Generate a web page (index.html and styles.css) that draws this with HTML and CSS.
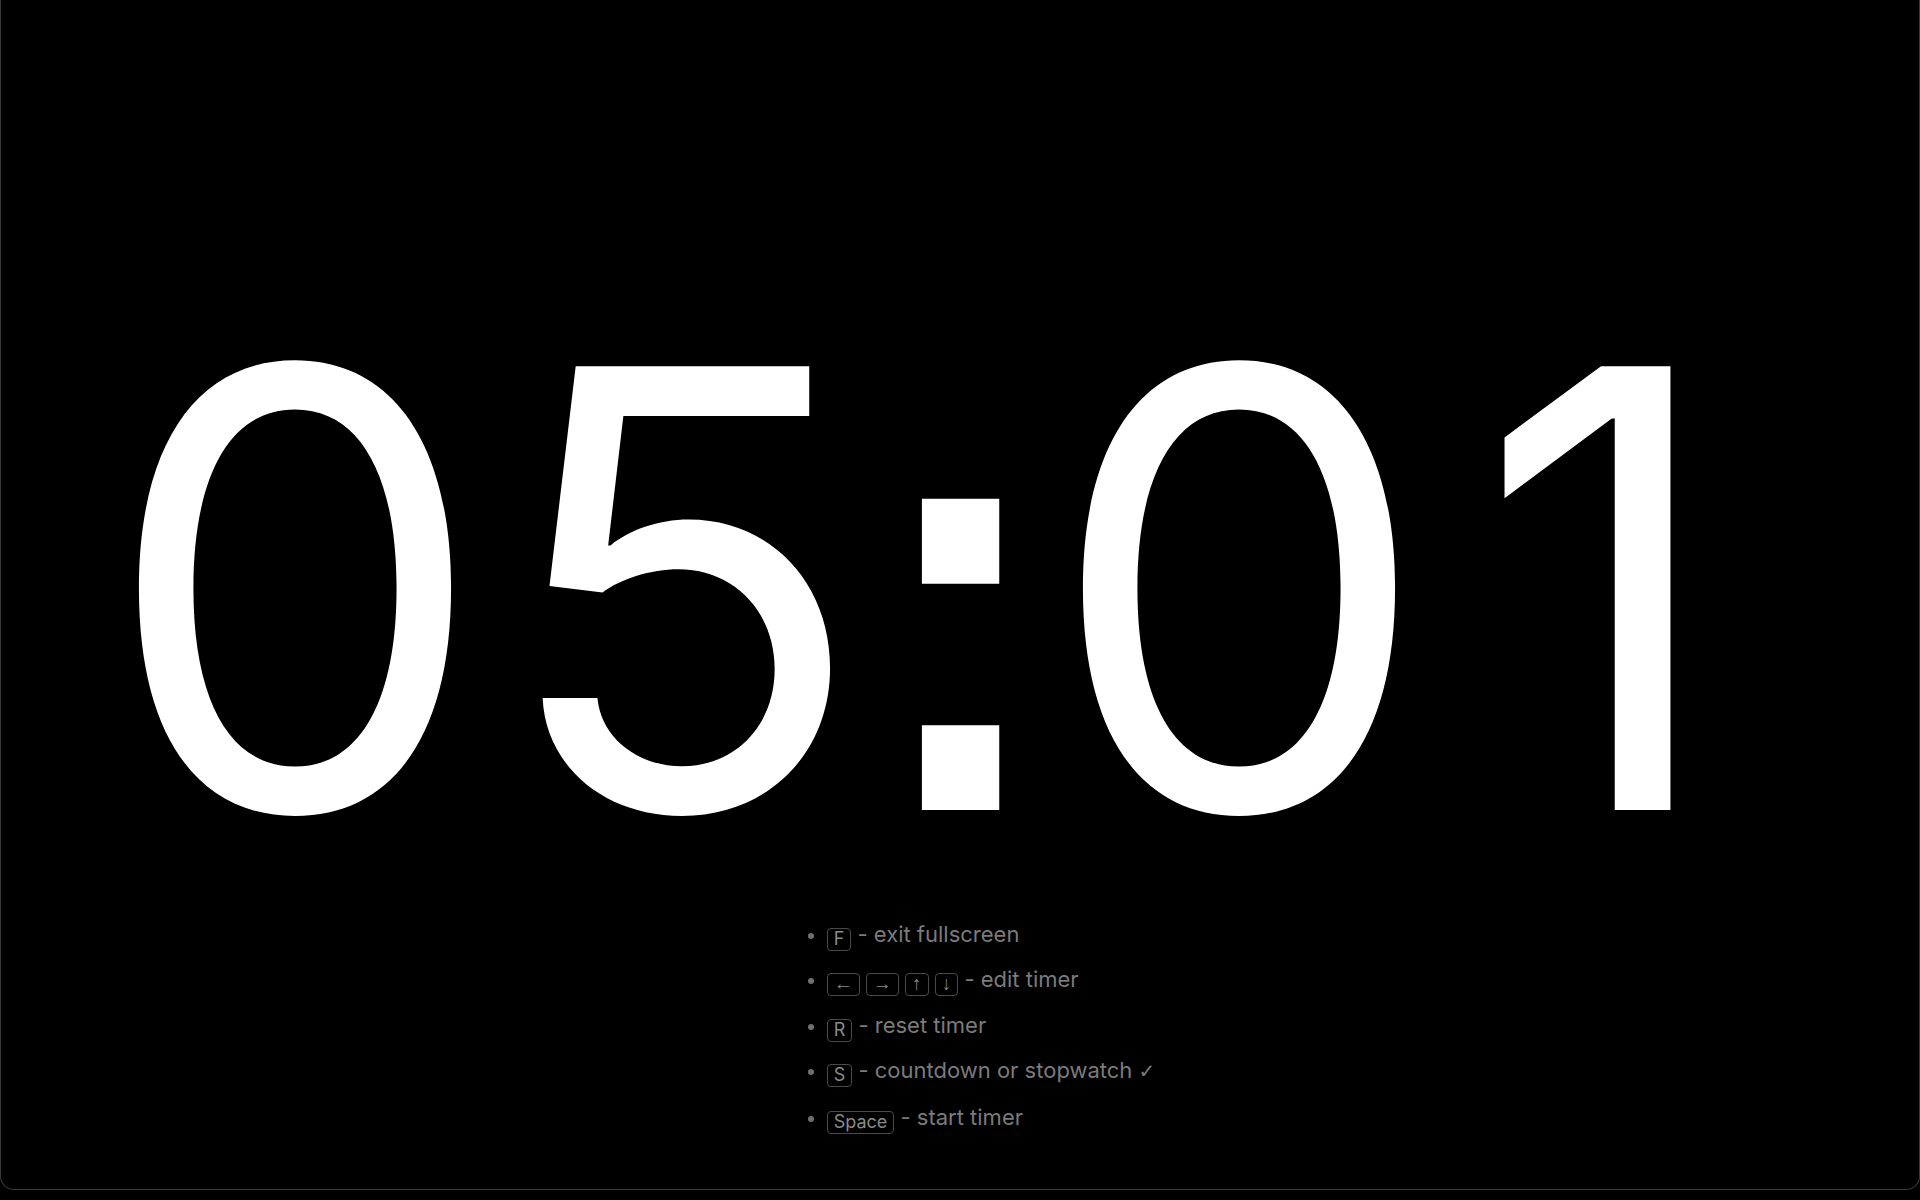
FILE: index.html
```html
<!DOCTYPE html>
<html lang="en">
<head>
<meta charset="utf-8">
<title>Timer</title>
<link rel="stylesheet" href="styles.css">
</head>
<body>
<div class="frame">
  <div class="spacer"></div>
  <div class="timer"><span class="digit">0</span><span class="digit">5</span><span class="colon">:</span><span class="digit">0</span><span class="digit one">1</span></div>
  <div class="help-row">
    <ul class="help">
      <li><span class="key">F</span> - exit fullscreen</li>
      <li><span class="key arrow">&larr;</span> <span class="key arrow">&rarr;</span> <span class="key arrow">&uarr;</span> <span class="key arrow">&darr;</span> - edit timer</li>
      <li><span class="key">R</span> - reset timer</li>
      <li><span class="key">S</span> - countdown or stopwatch <span class="check">&#10003;</span></li>
      <li><span class="key">Space</span> - start timer</li>
    </ul>
  </div>
</div>
</body>
</html>
```

FILE: styles.css
```css
html, body {
  margin: 0;
  padding: 0;
  background: #000;
}

body {
  width: 1920px;
  height: 1200px;
  overflow: hidden;
  font-family: Inter, Roboto, "Liberation Sans", sans-serif;
}

.frame {
  box-sizing: border-box;
  width: 1920px;
  height: 1190px;
  border: 1px solid #3a3a3a;
  border-top: none;
  border-radius: 0 0 14px 14px;
  display: grid;
  grid-template-rows: 1fr auto 1fr;
}

.timer {
  margin-top: -14px;
  height: 604px;
  display: flex;
  justify-content: center;
  align-items: baseline;
  color: #fff;
  font-family: Inter, sans-serif;
  font-size: 610px;
  line-height: 604px;
  white-space: nowrap;
}

.digit {
  box-sizing: border-box;
  width: 386px;
  text-align: center;
}

.digit.one {
  padding-right: 50px;
}

.colon {
  box-sizing: border-box;
  width: 172px;
  margin-left: -5px;
  margin-right: 5px;
  text-align: left;
  font-family: "Liberation Sans", sans-serif;
  font-weight: 700;
  font-size: 550px;
  transform: scaleY(1.12);
  transform-origin: 50% 493px;
}

.help-row {
  display: flex;
  justify-content: center;
  align-items: flex-start;
}

.help {
  margin: 22px 0 0 0;
  padding: 0 0 0 62px;
  color: #7b7b7b;
  font-size: 22px;
  line-height: 45.6px;
  list-style: disc;
}

.help li::marker {
  color: #707070;
  font-size: 20px;
}

.key {
  display: inline-block;
  box-sizing: border-box;
  height: 23px;
  line-height: 20px;
  padding: 0 6px;
  border: 1.5px solid #4a4a4a;
  border-radius: 4px;
  font-size: 18px;
  color: #8a8a8a;
  vertical-align: -3px;
  text-align: center;
}

.key.arrow {
  font-family: "Liberation Sans", sans-serif;
  font-size: 19px;
  padding: 0 6px;
}

.check {
  font-family: "DejaVu Sans", sans-serif;
  font-size: 20px;
}
```
